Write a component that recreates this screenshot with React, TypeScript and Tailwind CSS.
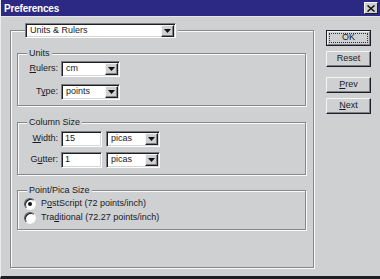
import React from 'react';

const font = { fontFamily: '"Liberation Sans", Arial, sans-serif' };

const Key: React.FC<{ children: React.ReactNode }> = ({ children }) => (
  <span className="underline underline-offset-[1px]">{children}</span>
);

// sunken white box, classic win9x look
const Sunken: React.FC<{ className?: string; children?: React.ReactNode }> = ({ className = '', children }) => (
  <div
    className={`flex items-center bg-white border border-t-[#7d7d80] border-l-[#7d7d80] border-b-white border-r-white shadow-[inset_1px_1px_0_#1d1d2a,inset_-1px_-1px_0_#d6d6d8] ${className}`}
  >
    {children}
  </div>
);

const ArrowBtn = () => (
  <div className="ml-auto mr-[1px] w-[13px] h-[12px] flex items-center justify-center bg-[#cfd0d2] border border-t-[#f4f4f4] border-l-[#f4f4f4] border-b-[#1d1d2a] border-r-[#1d1d2a] shadow-[inset_-1px_-1px_0_#808082]">
    <svg width="7" height="4" viewBox="0 0 7 4">
      <path d="M0 0h7L3.5 4z" fill="#111" />
    </svg>
  </div>
);

const Select: React.FC<{ value: string; className: string }> = ({ value, className }) => (
  <Sunken className={className}>
    <span className="pl-[4px]">{value}</span>
    <ArrowBtn />
  </Sunken>
);

const Button: React.FC<{ children: React.ReactNode; isDefault?: boolean }> = ({ children, isDefault }) =>
  isDefault ? (
    <div className="w-[45px] h-[16px] border border-[#1d1d2a] flex">
      <div className="flex-1 flex items-center justify-center border border-t-[#f4f4f4] border-l-[#f4f4f4] border-b-[#808082] border-r-[#808082] outline outline-1 outline-dotted outline-[#333] -outline-offset-[3px]">
        {children}
      </div>
    </div>
  ) : (
    <div className="w-[45px] h-[16px] flex items-center justify-center border border-t-[#f4f4f4] border-l-[#f4f4f4] border-b-[#1d1d2a] border-r-[#1d1d2a] shadow-[inset_-1px_-1px_0_#808082]">
      {children}
    </div>
  );

const Group: React.FC<{ title: string; className?: string; children: React.ReactNode }> = ({ title, className = '', children }) => (
  <fieldset className={`w-[289px] px-0 border border-[#87878a] shadow-[inset_1px_1px_0_#fafafa,1px_1px_0_#fafafa] ${className}`}>
    <legend className="ml-[9px] px-[2px] leading-[13px] bg-[#cfd0d2]">{title}</legend>
    {children}
  </fieldset>
);

const Radio: React.FC<{ checked?: boolean }> = ({ checked }) => (
  <div className="w-[12px] h-[12px] rounded-full bg-white border border-t-[#5a5a60] border-l-[#5a5a60] border-b-[#f4f4f4] border-r-[#f4f4f4] shadow-[inset_1px_1px_0_#1d1d2a] flex items-center justify-center">
    {checked && <div className="w-[4px] h-[4px] rounded-full bg-[#111]" />}
  </div>
);

const Label: React.FC<{ children: React.ReactNode }> = ({ children }) => (
  <div className="w-[40px] text-right mr-[3px]">{children}</div>
);

export default function App() {
  return (
    <div
      style={font}
      className="w-[380px] h-[279px] bg-[#cfd0d2] text-[9px] text-[#1a1a24] flex flex-col border-l border-l-[#ececee] border-b-[3px] border-b-[#1e1e22] overflow-hidden"
    >
      {/* title bar */}
      <div className="h-[17px] bg-[#2b2984] flex items-center pl-[3px] pr-[2px] border-b border-b-[#e6e6ea]">
        <span className="text-white font-bold text-[10px] tracking-[-0.2px]">Preferences</span>
        <div className="ml-auto w-[14px] h-[12px] flex items-center justify-center bg-[#cfd0d2] border border-t-[#f4f4f4] border-l-[#f4f4f4] border-b-[#1d1d2a] border-r-[#1d1d2a]">
          <svg width="8" height="7" viewBox="0 0 8 7">
            <path d="M0.5 0.5L7.5 6.5M7.5 0.5L0.5 6.5" stroke="#111" strokeWidth="1.5" />
          </svg>
        </div>
      </div>

      <div className="flex pl-[9px] pt-[6px]">
        <fieldset className="w-[304px] h-[245px] px-0 border border-[#87878a] shadow-[inset_1px_1px_0_#fafafa,1px_1px_0_#fafafa]">
          <legend className="ml-[14px] bg-[#cfd0d2] pr-[2px]">
            <Select value="Units & Rulers" className="w-[151px] h-[15px]" />
          </legend>
          <div className="pl-[6px] pt-[9px] flex flex-col gap-[9px]">
            <Group title="Units">
              <div className="flex flex-col gap-[7px] pt-[1px] pb-[5px]">
                <div className="flex items-center">
                  <Label><Key>R</Key>ulers:</Label>
                  <Select value="cm" className="w-[59px] h-[16px]" />
                </div>
                <div className="flex items-center">
                  <Label>T<Key>y</Key>pe:</Label>
                  <Select value="points" className="w-[59px] h-[16px]" />
                </div>
              </div>
            </Group>

            <Group title="Column Size" className="mt-[1px]">
              <div className="flex flex-col gap-[5px] pt-[2px] pb-[6px]">
                <div className="flex items-center">
                  <Label><Key>W</Key>idth:</Label>
                  <Sunken className="w-[41px] h-[16px] pl-[3px]">15</Sunken>
                  <Select value="picas" className="ml-[4px] w-[54px] h-[16px]" />
                </div>
                <div className="flex items-center">
                  <Label>G<Key>u</Key>tter:</Label>
                  <Sunken className="w-[41px] h-[16px] pl-[3px]">1</Sunken>
                  <Select value="picas" className="ml-[4px] w-[54px] h-[16px]" />
                </div>
              </div>
            </Group>

            <Group title="Point/Pica Size">
              <div className="flex flex-col pb-[4px] pl-[6px]">
                <div className="h-[14px] flex items-center gap-[5px]">
                  <Radio checked />
                  <span>P<Key>o</Key>stScript (72 points/inch)</span>
                </div>
                <div className="h-[14px] flex items-center gap-[5px]">
                  <Radio />
                  <span>Tra<Key>d</Key>itional (72.27 points/inch)</span>
                </div>
              </div>
            </Group>
          </div>
        </fieldset>

        <div className="ml-[12px] mt-[7px] flex flex-col">
          <Button isDefault>OK</Button>
          <div className="mt-[5px]"><Button>Reset</Button></div>
          <div className="mt-[10px]"><Button><Key>P</Key>rev</Button></div>
          <div className="mt-[5px]"><Button><Key>N</Key>ext</Button></div>
        </div>
      </div>
    </div>
  );
}
